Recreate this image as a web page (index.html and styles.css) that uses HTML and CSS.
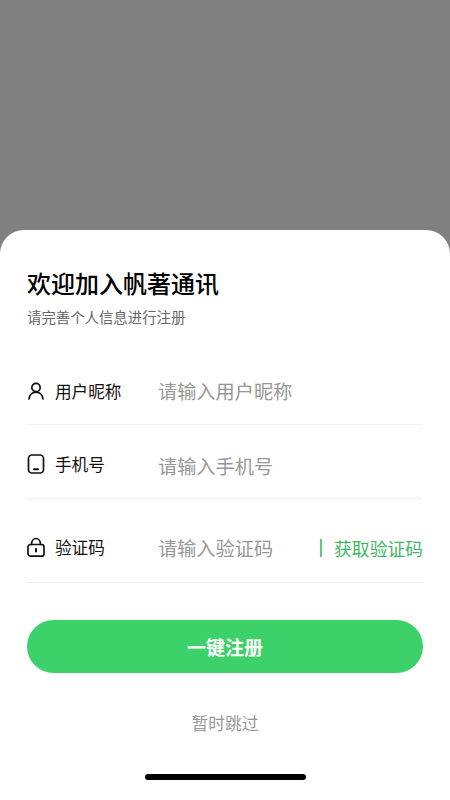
FILE: index.html
```html
<!DOCTYPE html>
<html lang="zh">
<head>
<meta charset="utf-8">
<title>注册</title>
<link rel="stylesheet" href="styles.css">
</head>
<body>
<div class="screen">
  <div class="scrim"></div>
  <section class="sheet">
    <h1 class="title">欢迎加入帆著通讯</h1>
    <p class="subtitle">请完善个人信息进行注册</p>
    <div class="row row-name">
      <svg class="icon" viewBox="0 0 18 20" fill="none" stroke="#111" stroke-width="1.7" stroke-linecap="round"><circle cx="9" cy="6.500" r="4.200"/><path d="M2 18c.4-3.900 3.200-6.900 7-6.900s6.600 3 7 6.900"/></svg>
      <span class="label">用户昵称</span>
      <span class="placeholder">请输入用户昵称</span>
    </div>
    <div class="row row-phone">
      <svg class="icon" viewBox="0 0 18 20" fill="none" stroke="#111" stroke-width="1.7" stroke-linecap="round"><rect x="1.500" y="1" width="15" height="18" rx="3.500"/><path d="M7 15.200h4" stroke-width="2"/></svg>
      <span class="label">手机号</span>
      <span class="placeholder">请输入手机号</span>
    </div>
    <div class="row row-code">
      <svg class="icon" viewBox="0 0 18 20" fill="none" stroke="#111" stroke-width="1.7" stroke-linecap="round"><rect x="1" y="7.500" width="16" height="11.700" rx="2.500"/><path d="M4.500 7.500c0-3.500 1.800-6 4.500-6s4.500 2.500 4.500 6"/><path d="M9 12v2.500" stroke-width="2"/></svg>
      <span class="label">验证码</span>
      <span class="placeholder">请输入验证码</span>
      <span class="get-code">获取验证码</span>
    </div>
    <button class="submit" type="button">一键注册</button>
    <div class="skip">暂时跳过</div>
    <div class="home-bar"></div>
  </section>
</div>
</body>
</html>
```
FILE: styles.css
```css
* { box-sizing: border-box; }
html, body { margin: 0; padding: 0; }
body {
  width: 450px;
  height: 800px;
  overflow: hidden;
  font-family: "Noto Sans CJK SC", "Noto Sans", sans-serif;
  background: #808080;
}
.screen { display: flex; flex-direction: column; height: 800px; }
.scrim { height: 230px; flex: none; background: #808080; }
.sheet {
  flex: 1;
  background: #fff;
  border-radius: 24px 24px 0 0;
  padding: 37px 27px 0;
  display: flex;
  flex-direction: column;
}
.title {
  margin: 0;
  font-size: 24px;
  line-height: 32px;
  font-weight: 500;
  color: #000;
}
.subtitle {
  margin: 8px 0 0;
  font-size: 14.4px;
  line-height: 20px;
  color: #666;
}
.row {
  display: flex;
  align-items: center;
  border-bottom: 1px solid #f1f1f1;
  margin-right: 1px;
}
.row-name { height: 98px; padding-top: 42px; padding-bottom: 11px; }
.row-phone { height: 74px; padding-top: 8px; }
.row-code { height: 84px; padding-top: 14px; }
.icon { width: 18px; height: 20px; flex: none; margin-right: 10px; }
.row-phone .icon, .row-phone .label { margin-bottom: 4px; }
.row-code .icon, .row-code .label { margin-bottom: 2px; }
.label {
  width: 103px;
  flex: none;
  font-size: 16.6px;
  line-height: 22px;
  color: #111;
}
.placeholder {
  flex: 1;
  font-size: 19.2px;
  line-height: 28px;
  color: #979797;
}
.get-code {
  flex: none;
  border-left: 2px solid #5fca82;
  padding-left: 12px;
  margin-right: -1px;
  font-size: 17.8px;
  line-height: 18px;
  color: #3fb765;
  white-space: nowrap;
}
.submit {
  margin-top: 37px;
  height: 53px;
  width: 100%;
  border: 0;
  border-radius: 27px;
  background: #3dd16a;
  color: #fff;
  font-family: inherit;
  font-size: 19px;
  font-weight: 700;
  padding: 0;
}
.skip {
  margin-top: 38px;
  text-align: center;
  font-size: 16.8px;
  line-height: 24px;
  color: #999;
}
.home-bar {
  align-self: center;
  margin-top: 39px;
  width: 161px;
  height: 6px;
  border-radius: 3px;
  background: #000;
}
```
